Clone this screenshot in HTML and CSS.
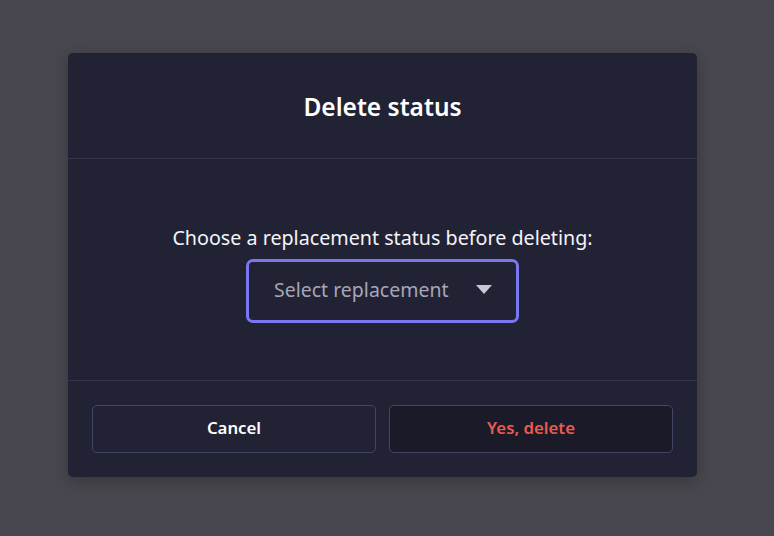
FILE: index.html
```html
<!DOCTYPE html>
<html lang="en">
<head>
<meta charset="utf-8">
<title>Delete status</title>
<link rel="stylesheet" href="styles.css">
</head>
<body>
<div class="backdrop">
  <div class="modal">
    <div class="modal-header">
      <h2 class="modal-title">Delete status</h2>
    </div>
    <div class="modal-body">
      <p class="prompt">Choose a replacement status before deleting:</p>
      <div class="select">
        <span class="select-label">Select replacement</span>
        <svg class="caret" width="16" height="9" viewBox="0 0 16 9"><path d="M0 0 H16 L8 9 Z" fill="#c9c9d6"/></svg>
      </div>
    </div>
    <div class="modal-footer">
      <button class="btn btn-cancel">Cancel</button>
      <button class="btn btn-delete">Yes, delete</button>
    </div>
  </div>
</div>
</body>
</html>
```

FILE: styles.css
```css
html, body {
  margin: 0;
  padding: 0;
  height: 100%;
}
body {
  background: #48474f;
  font-family: "Noto Sans", "Open Sans", sans-serif;
}
.backdrop {
  display: flex;
  justify-content: flex-start;
  padding: 53px 0 0 68px;
}
.modal {
  width: 629px;
  background: #222235;
  border-radius: 5px;
  box-shadow: 0 4px 16px rgba(0, 0, 0, 0.25);
  display: flex;
  flex-direction: column;
}
.modal-header {
  height: 105px;
  display: flex;
  align-items: center;
  justify-content: center;
  border-bottom: 1px solid #34344b;
}
.modal-title {
  margin: 0;
  color: #ffffff;
  font-size: 24.5px;
  font-weight: 600;
  padding-top: 1px;
}
.modal-body {
  height: 222px;
  display: flex;
  flex-direction: column;
  align-items: center;
  justify-content: center;
  border-bottom: 1px solid #34344b;
  padding-top: 8px;
  box-sizing: border-box;
}
.prompt {
  margin: 0 0 8px;
  color: #f4f4f8;
  font-size: 19.7px;
  line-height: 26px;
}
.select {
  width: 273px;
  height: 64px;
  box-sizing: border-box;
  border: 3px solid #7b77f2;
  border-radius: 7px;
  display: flex;
  align-items: center;
  padding: 0 22px 2px 25px;
  gap: 27px;
}
.select-label {
  color: #a6a6b8;
  font-size: 19.5px;
}
.caret {
  display: block;
}
.modal-footer {
  display: flex;
  gap: 13px;
  padding: 24px;
}
.btn {
  flex: 1;
  height: 48px;
  padding: 0 0 3px;
  border: 1px solid #45456a;
  border-radius: 5px;
  font-family: inherit;
  font-size: 16.8px;
  font-weight: 600;
  cursor: pointer;
}
.btn-cancel {
  background: #222235;
  color: #ffffff;
}
.btn-delete {
  background: #1b1a29;
  color: #ea5a50;
}
```
